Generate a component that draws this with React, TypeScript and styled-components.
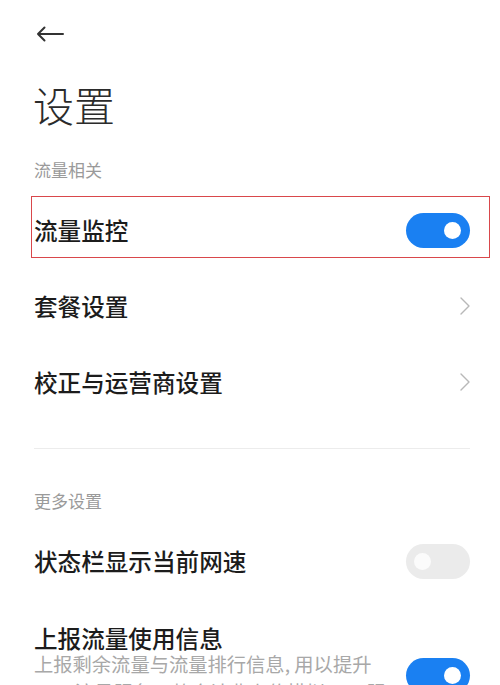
import React from "react";
import styled, { createGlobalStyle } from "styled-components";

const GlobalStyle = createGlobalStyle`
  html, body {
    margin: 0;
    padding: 0;
    background: #ffffff;
  }
  body {
    font-family: "Noto Sans CJK SC", "Noto Sans", sans-serif;
    color: #1c1c1c;
  }
`;

// 목록 데이터
const TRAFFIC_ITEMS = [
  { label: "流量监控", kind: "toggle", on: true, highlight: true },
  { label: "套餐设置", kind: "link" },
  { label: "校正与运营商设置", kind: "link" },
] as const;

export default function App() {
  return (
    <Page>
      <GlobalStyle />
      <Header>
        <BackIcon viewBox="0 0 28 16">
          <path
            d="M27 8H2M8.5 1.5L2 8l6.5 6.5"
            fill="none"
            stroke="#333"
            strokeWidth="2"
            strokeLinecap="round"
            strokeLinejoin="round"
          />
        </BackIcon>
      </Header>

      <Title>设置</Title>

      <SectionLabel $top={30}>流量相关</SectionLabel>
      {TRAFFIC_ITEMS.map((item) => (
        <Row key={item.label} $highlight={"highlight" in item && item.highlight}>
          <RowLabel>{item.label}</RowLabel>
          {item.kind === "toggle" ? (
            <Toggle $on={item.on} />
          ) : (
            <Chevron viewBox="0 0 10 18">
              <path
                d="M1 1l8 8-8 8"
                fill="none"
                stroke="#b8b8b8"
                strokeWidth="1.4"
                strokeLinecap="round"
                strokeLinejoin="round"
              />
            </Chevron>
          )}
        </Row>
      ))}

      <Divider />

      <SectionLabel $top={40}>更多设置</SectionLabel>
      <Row>
        <RowLabel>状态栏显示当前网速</RowLabel>
        <Toggle $on={false} />
      </Row>

      <TallRow>
        <TextBlock>
          <RowLabel $compact>上报流量使用信息</RowLabel>
          <Description>
            上报剩余流量与流量排行信息, 用以提升MIUI流量服务，整合计费上传模拟MIUI服务体验
          </Description>
        </TextBlock>
        <Toggle $on={true} $alignTop />
      </TallRow>
    </Page>
  );
}

const Page = styled.div`
  padding: 0 30px 0 34px;
  height: 685px;
  overflow: hidden;
`;

const Header = styled.div`
  height: 68px;
  display: flex;
  align-items: center;
`;

const BackIcon = styled.svg`
  width: 28px;
  height: 16px;
  margin-left: 2px;
`;

const Title = styled.h1`
  margin: 12px 0 0 -1px;
  font-size: 41px;
  line-height: 48px;
  font-weight: 300;
  color: #2b2b2b;
`;

const SectionLabel = styled.div<{ $top: number }>`
  margin-top: ${(p) => p.$top}px;
  margin-bottom: 10px;
  font-size: 17px;
  line-height: 24px;
  color: #9a9a9a;
`;

const Row = styled.div<{ $highlight?: boolean }>`
  position: relative;
  height: 76px;
  display: flex;
  align-items: center;
  justify-content: space-between;

  ${(p) =>
    p.$highlight &&
    `
    &::after {
      content: "";
      position: absolute;
      left: -3px;
      right: -20px;
      top: 4px;
      bottom: 10px;
      border: 1.5px solid #d9474b;
    }
  `}
`;

const TallRow = styled.div`
  display: flex;
  align-items: flex-start;
  justify-content: space-between;
  padding-top: 27px;
`;

const TextBlock = styled.div`
  width: 358px;
  display: flex;
  flex-direction: column;
`;

const RowLabel = styled.span<{ $compact?: boolean }>`
  font-size: 23.6px;
  line-height: ${(p) => (p.$compact ? "24px" : "28px")};
  font-weight: 500;
  color: #1c1c1c;
`;

const Description = styled.p`
  margin: 0;
  font-size: 19.3px;
  line-height: 28px;
  color: #a8a8a8;
`;

const Toggle = styled.div<{ $on: boolean; $alignTop?: boolean }>`
  position: relative;
  flex-shrink: 0;
  width: 64px;
  height: 35px;
  border-radius: 18px;
  margin-top: ${(p) => (p.$alignTop ? "32px" : "0")};
  background: ${(p) => (p.$on ? "#1a80f2" : "#ebebeb")};

  &::after {
    content: "";
    position: absolute;
    top: 9px;
    width: 17px;
    height: 17px;
    border-radius: 50%;
    background: ${(p) => (p.$on ? "#ffffff" : "#fbfbfb")};
    ${(p) => (p.$on ? "right: 9px;" : "left: 8px;")}
  }
`;

const Chevron = styled.svg`
  width: 10px;
  height: 18px;
`;

const Divider = styled.div`
  margin-top: 28px;
  height: 1px;
  background: #ececec;
`;
